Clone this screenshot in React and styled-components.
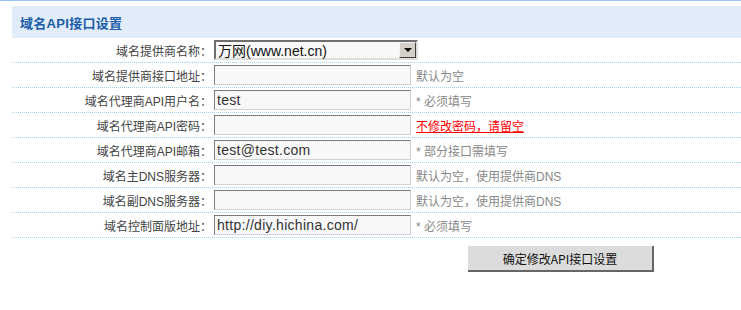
import React from "react";
import styled, { createGlobalStyle } from "styled-components";

const GlobalStyle = createGlobalStyle`
  html, body {
    margin: 0;
    padding: 0;
    background: #fff;
  }
  body {
    border-top: 1px solid #9cc4f2;
    font-family: "Liberation Sans", "Noto Sans CJK SC", sans-serif;
    font-size: 12px;
    color: #444;
  }
`;

const Page = styled.div`
  padding: 5px 0 0 12px;
`;

const Header = styled.div`
  height: 32px;
  display: flex;
  align-items: center;
  padding-left: 8px;
  background: #e1ecf9;
  color: #1c5ca8;
  font-weight: bold;
  font-size: 13px;
  letter-spacing: 0.3px;
`;

const Row = styled.div`
  box-sizing: border-box;
  display: grid;
  grid-template-columns: 200px 1fr;
  align-items: center;
  height: 25px;
  border-bottom: 1px dotted #9fd0e6;
`;

const Label = styled.div`
  text-align: right;
  color: #444;
  white-space: nowrap;
`;

const Field = styled.div`
  display: flex;
  align-items: center;
  gap: 5px;
  padding-left: 2px;
`;

const Input = styled.input`
  box-sizing: border-box;
  width: 197px;
  height: 20px;
  margin: 0;
  padding: 0 2px;
  border: 1px solid;
  border-color: #7a7a7a #d0d0d0 #d0d0d0 #7a7a7a;
  background: #f8f8f8;
  color: #333;
  font-family: "Liberation Sans", sans-serif;
  font-size: 14px;
  letter-spacing: 0.3px;
  outline: none;
`;

const Select = styled.div`
  box-sizing: border-box;
  width: 204px;
  height: 20px;
  display: flex;
  align-items: stretch;
  border: 2px solid;
  border-color: #6e6e6e #e0ded8 #e0ded8 #6e6e6e;
  background: #fff;
`;

const SelectText = styled.span`
  flex: 1;
  display: flex;
  align-items: center;
  padding-left: 2px;
  font-family: "Liberation Sans", "Noto Sans CJK SC", sans-serif;
  font-size: 14px;
  color: #111;
  background: #f8f8f8;
`;

const Arrow = styled.span`
  width: 15px;
  display: flex;
  align-items: center;
  justify-content: center;
  background: #d4d0c8;
  border: 1px solid;
  border-color: #f4f4f4 #404040 #404040 #f4f4f4;
  &::after {
    content: "";
    border-left: 4px solid transparent;
    border-right: 4px solid transparent;
    border-top: 4px solid #000;
  }
`;

const Hint = styled.span`
  color: ${(p) => (p.$warn ? "#ff0000" : "#888")};
  text-decoration: ${(p) => (p.$warn ? "underline" : "none")};
  white-space: nowrap;
`;

const Actions = styled.div`
  padding: 8px 0 0 456px;
`;

const Button = styled.button`
  width: 186px;
  height: 26px;
  margin: 0;
  border: none;
  border-right: 2px solid #666;
  border-bottom: 2px solid #666;
  background: #dcdcdc;
  color: #111;
  font-family: "Noto Sans CJK SC", sans-serif;
  font-size: 12px;
  cursor: pointer;
`;

const rows = [
  { label: "域名提供商接口地址：", value: "", hint: "默认为空" },
  { label: "域名代理商API用户名：", value: "test", hint: "* 必须填写" },
  { label: "域名代理商API密码：", value: "", hint: "不修改密码，请留空", warn: true },
  { label: "域名代理商API邮箱：", value: "test@test.com", hint: "* 部分接口需填写" },
  { label: "域名主DNS服务器：", value: "", hint: "默认为空，使用提供商DNS" },
  { label: "域名副DNS服务器：", value: "", hint: "默认为空，使用提供商DNS" },
  { label: "域名控制面版地址：", value: "http://diy.hichina.com/", hint: "* 必须填写" },
];

const App = () => {
  return (
    <Page>
      <GlobalStyle />
      <Header>域名API接口设置</Header>
      <Row>
        <Label>域名提供商名称：</Label>
        <Field>
          <Select>
            <SelectText>万网(www.net.cn)</SelectText>
            <Arrow />
          </Select>
        </Field>
      </Row>
      {rows.map((r) => (
        <Row key={r.label}>
          <Label>{r.label}</Label>
          <Field>
            <Input type="text" defaultValue={r.value} />
            <Hint $warn={r.warn}>{r.hint}</Hint>
          </Field>
        </Row>
      ))}
      <Actions>
        <Button type="button">确定修改API接口设置</Button>
      </Actions>
    </Page>
  );
};

export default App;
